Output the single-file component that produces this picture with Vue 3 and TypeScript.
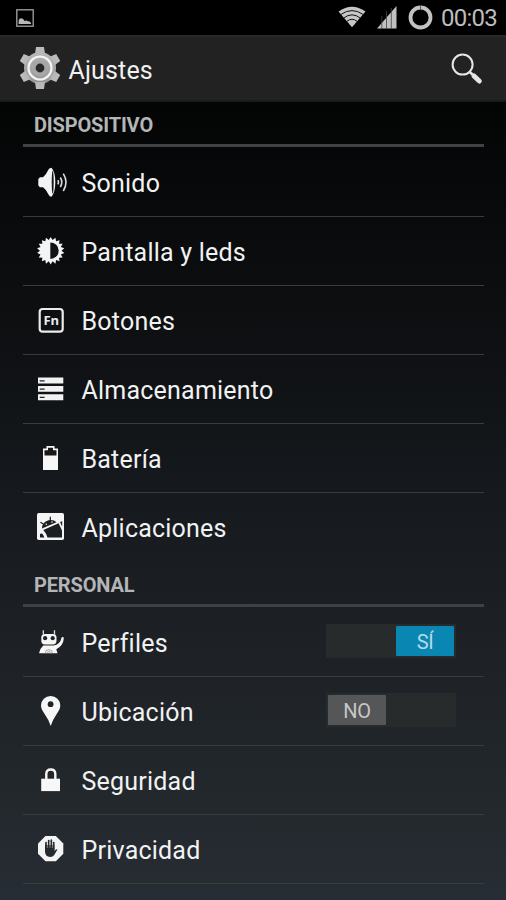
<script setup lang="ts">
import { ref } from 'vue'

interface Item {
  icon: string
  label: string
  on?: boolean
}
interface Section {
  title: string
  items: Item[]
}

const sections = ref<Section[]>([
  {
    title: 'DISPOSITIVO',
    items: [
      { icon: 'sound', label: 'Sonido' },
      { icon: 'display', label: 'Pantalla y leds' },
      { icon: 'buttons', label: 'Botones' },
      { icon: 'storage', label: 'Almacenamiento' },
      { icon: 'battery', label: 'Batería' },
      { icon: 'apps', label: 'Aplicaciones' },
    ],
  },
  {
    title: 'PERSONAL',
    items: [
      { icon: 'profiles', label: 'Perfiles', on: true },
      { icon: 'location', label: 'Ubicación', on: false },
      { icon: 'security', label: 'Seguridad' },
      { icon: 'privacy', label: 'Privacidad' },
    ],
  },
])

// Saw-toothed disc used by the brightness icon
const teeth = 18
const sun = Array.from({ length: teeth * 2 }, (_, i) => {
  const r = i % 2 ? 10.8 : 13.8
  const a = (i * Math.PI) / teeth - Math.PI / 2
  return `${(16.7 + r * Math.cos(a)).toFixed(2)},${(16.7 + r * Math.sin(a)).toFixed(2)}`
}).join(' ')

const gearAngles = [0, 60, 120, 180, 240, 300]

function toggle(item: Item) {
  if (item.on !== undefined) item.on = !item.on
}
</script>

<template>
  <div class="screen">
    <div class="status">
      <svg class="shot" width="18" height="18" viewBox="0 0 18 18">
        <rect x=".8" y=".8" width="16.4" height="16.4" fill="none" stroke="#a4a4a4" stroke-width="1.3" />
        <path d="M2.6 15V11.4Q3.8 8.6 6 9.4Q7.6 9.4 8.6 12Q10.5 10.8 12 12.3Q14.6 11.5 15.3 15Z" fill="#b8b8b8" />
      </svg>
      <svg class="wifi" width="28" height="22" viewBox="0 0 28 22">
        <path d="M.5 5.5Q14-4.2 27.5 5.5L14 21.3Z" fill="#c6c6c6" />
        <g fill="none" stroke="#111" stroke-width="1">
          <path d="M2.6 8.600Q14 .6 25.400 8.600" />
          <path d="M5.600 12.100Q14 5.600 22.400 12.100" />
          <path d="M8.600 15.500Q14 11 19.400 15.500" />
        </g>
      </svg>
      <svg class="signal" width="20" height="23" viewBox="0 0 20 23">
        <path d="M0 22.5L19.5 0V22.5Z" fill="#c0c0c0" />
        <path d="M4.800 10V23M9.500 5V23M14.300 2V23" stroke="#444" stroke-width=".8" />
      </svg>
      <svg class="ring" width="25" height="25" viewBox="0 0 25 25">
        <circle cx="12.5" cy="12.5" r="10" fill="none" stroke="#c2c2c2" stroke-width="3.8" />
        <path d="M12.500 0V5" stroke="#444" stroke-width=".8" />
      </svg>
      <span class="clock">00:03</span>
    </div>

    <header class="bar">
      <svg class="gear" width="42" height="44" viewBox="-21 -22 42 44">
        <defs>
          <linearGradient id="metal" x1="0" y1="-21" x2="0" y2="21" gradientUnits="userSpaceOnUse">
            <stop offset="0" stop-color="#bdbdbd" />
            <stop offset="1" stop-color="#8e8e8e" />
          </linearGradient>
        </defs>
        <g fill="url(#metal)">
          <circle r="16" />
          <path v-for="a in gearAngles" :key="a" d="M-5-14L-4-21H4L5-14Z" :transform="`rotate(${a})`" />
        </g>
        <circle r="8.5" fill="#a6a6a6" />
        <circle r="11.5" fill="none" stroke="#f3f3f3" stroke-width="2.2" />
        <circle r="4.4" fill="#292929" />
      </svg>
      <h1>Ajustes</h1>
      <svg class="search" width="32" height="32" viewBox="0 0 32 32">
        <circle cx="11.6" cy="11.6" r="10" fill="none" stroke="#e6e6e6" stroke-width="2" />
        <path d="M18.5 18.8L21.5 21.5" stroke="#e6e6e6" stroke-width="2.6" />
        <path d="M23 23L28.3 28" stroke="#e6e6e6" stroke-width="5" stroke-linecap="round" />
      </svg>
    </header>

    <main class="list">
      <section v-for="section in sections" :key="section.title">
        <h2>{{ section.title }}</h2>
        <div v-for="item in section.items" :key="item.label" class="row" @click="toggle(item)">
          <svg class="icon" width="34" height="34" viewBox="0 0 34 34">
            <g v-if="item.icon === 'sound'">
              <path d="M4.3 14L6 12.300H9Q12.500 9 14.500 4.500Q15.500 2.700 17.500 2.700Q21.300 7 21.300 17.200T17.500 31.700Q15.500 31.700 14.500 29.500Q12.500 24.800 9 22.300H6L4.300 20.500Z" fill="#f4f4f4" />
              <ellipse cx="18.700" cy="17.200" rx="1" ry="11.500" fill="#161718" />
              <path d="M23.900 15.200Q25 17.300 23.900 19.400M26.300 12.500Q29.300 17.300 26.300 22M29.300 8.600Q34.700 17.300 29.300 26" fill="none" stroke="#ddd" stroke-width="1.6" />
            </g>
            <g v-else-if="item.icon === 'display'">
              <polygon :points="sun" fill="#f4f4f4" />
              <path d="M16.300 8.400A8.400 8.300 0 0 1 16.300 25Z" fill="#111314" />
            </g>
            <g v-else-if="item.icon === 'buttons'">
              <rect x="5.700" y="6" width="23" height="22.700" rx="3" fill="none" stroke="#ececec" stroke-width="2.2" />
              <text x="17.300" y="21.500" class="fn">Fn</text>
            </g>
            <g v-else-if="item.icon === 'storage'">
              <path d="M4 5.500H29.300V11.500H4ZM4 14H29.300V19.700H4ZM4 22.300H29.300V28.200H4Z" fill="#f2f2f2" />
              <path d="M5.700 8.800H10.600M5.700 17.100H10.600M5.700 25.300H10.600" stroke="#222" stroke-width="1.3" />
            </g>
            <g v-else-if="item.icon === 'battery'">
              <path d="M9 29V7.500H12.500V5H20.500V7.500H24V29Z" fill="#f7f7f7" />
              <path d="M10.500 14.600V9.300H14V6.700H19V9.300H22.500V14.600Z" fill="#17191c" />
            </g>
            <g v-else-if="item.icon === 'apps'">
              <rect x="3" y="3" width="27" height="27" rx="1.8" fill="#f5f5f5" />
              <path d="M8 18.600Q8 12 14.500 10.300Q19.500 9.300 22.500 12.200Z" fill="#1c1f22" />
              <path d="M9.300 19.900L24.600 13.300L28 20.500V27.500H13.500Q12.500 23.500 9.300 19.900Z" fill="#1c1f22" />
              <path d="M16.300 10.500V7.200M9.300 14L6.800 12.500" stroke="#1c1f22" stroke-width="1.2" stroke-linecap="round" />
              <path d="M6 24Q8.500 21.800 10.300 27.500H6ZM26 12L28.200 11.300V16.500Z" fill="#1c1f22" />
              <circle cx="12.3" cy="14.200" r=".8" fill="#f2f2f2" />
              <circle cx="18" cy="12" r=".8" fill="#f2f2f2" />
            </g>
            <g v-else-if="item.icon === 'profiles'">
              <path d="M9.300 5.200V9.500M20.500 5.200V9.500" stroke="#ddd" stroke-width="1.3" />
              <rect x="7.300" y="9" width="15.200" height="10.400" rx="3.600" fill="#f6f6f6" />
              <circle cx="11.100" cy="13.200" r="2.100" fill="#202327" />
              <circle cx="18.700" cy="13.200" r="2.100" fill="#202327" />
              <path d="M5 28.300Q6 23.500 9.300 20.600H19.500Q26 20 27.700 12.300Q29.500 11.600 29.800 13Q29.500 20.500 22.300 24.300L23.500 28.300Z" fill="#f6f6f6" />
              <path d="M11.300 28.300Q11.300 24.600 14.900 24.600T18.500 28.300M13.400 28.300Q13.400 26.500 14.900 26.500T16.400 28.300" fill="none" stroke="#8c8e91" stroke-width=".8" />
            </g>
            <g v-else-if="item.icon === 'location'">
              <path d="M16.700 32Q14.600 25.500 10.300 19.500Q7 14.800 7 11.500A9.600 9.500 0 0 1 26.300 11.500Q26.300 14.800 23 19.500Q18.800 25.500 16.700 32Z" fill="#f7f7f7" />
              <circle cx="16.600" cy="10.200" r="2.900" fill="#202327" />
            </g>
            <g v-else-if="item.icon === 'security'">
              <rect x="7.200" y="15.700" width="18.800" height="12.400" fill="#f7f7f7" />
              <path d="M12.300 16V11Q12.300 6.500 16.800 6.500T21.300 11V16" fill="none" stroke="#f7f7f7" stroke-width="2.4" />
            </g>
            <g v-else>
              <path d="M11.500 4H21.800L29.300 11.500V21.700L21.800 29.200H11.500L4 21.700V11.500Z" fill="#f4f4f4" />
              <path d="M11 13V20Q11.500 24.800 16 25Q19.500 25 20.800 22L23.500 17.500Q22 16.800 20.300 19.300V13Z" fill="#242a2f" />
              <path d="M12 16V10.500M14.700 16V8.500M17.300 16V8M19.700 18V10.500" stroke="#242a2f" stroke-width="1.7" stroke-linecap="round" />
              <path d="M13.350 11V16M16 10V16M18.600 11V16" stroke="#d8d8d8" stroke-width=".5" />
            </g>
          </svg>
          <span class="label">{{ item.label }}</span>
          <span v-if="item.on !== undefined" class="switch" :class="{ on: item.on }">
            <span class="thumb">{{ item.on ? 'SÍ' : 'NO' }}</span>
          </span>
        </div>
      </section>
    </main>
  </div>
</template>

<style>
body {
  margin: 0;
  background: #000;
}
</style>

<style scoped>
.screen {
  width: 506px;
  height: 900px;
  overflow: hidden;
  display: flex;
  flex-direction: column;
  font-family: Roboto, "Liberation Sans", sans-serif;
  background: linear-gradient(#000 0, #030505 100px, #0c0e10 300px, #15181c 480px, #1d2126 640px, #22272b 780px, #272d34 900px);
}
.status {
  box-sizing: border-box;
  height: 35px;
  flex: none;
  display: flex;
  align-items: center;
  padding: 0 9px 0 16px;
  background: #000;
}
.shot {
  margin-right: auto;
}
.wifi {
  margin-right: 11px;
  margin-top: -1px;
}
.signal {
  margin-right: 11px;
  margin-top: -1px;
}
.ring {
  margin-right: 8px;
  margin-top: -1px;
}
.clock {
  width: 56px;
  font-size: 24px;
  letter-spacing: -0.75px;
  line-height: 36px;
  padding-top: 1px;
  color: #bdbdbd;
}
.bar {
  box-sizing: border-box;
  height: 67px;
  flex: none;
  display: flex;
  align-items: center;
  padding: 0 23px 0 19px;
  background: #222;
  border-top: 2px solid #292929;
  border-bottom: 2px solid #191a1a;
}
.gear {
  margin-right: 7.5px;
  margin-top: -1px;
}
h1 {
  margin: 4px auto 0 0;
  font-size: 25px;
  letter-spacing: 0.15px;
  line-height: 30px;
  font-weight: 400;
  color: #f1f1f1;
}
.list {
  padding: 0 22px 0 23px;
}
h2 {
  box-sizing: border-box;
  height: 45px;
  margin: 0 0 1px;
  padding-left: 11px;
  font-size: 20px;
  letter-spacing: -0.15px;
  line-height: 46px;
  font-weight: 700;
  color: #b4b5b6;
  border-bottom: 3px solid #3f4244;
}
.row {
  box-sizing: border-box;
  height: 69px;
  display: flex;
  align-items: center;
  padding: 0 28px 0 11px;
  border-bottom: 1px solid #393c3e;
}
section:first-child .row:last-child {
  border-bottom-color: transparent;
}
.icon {
  flex: none;
  margin-right: 13.500px;
}
.fn {
  font: 700 13px "Open Sans", sans-serif;
  text-anchor: middle;
  fill: #ececec;
}
.label {
  flex: 1;
  font-size: 25px;
  letter-spacing: 0.22px;
  line-height: 34px;
  margin-top: 3px;
  color: #f1f2f2;
}
.switch {
  box-sizing: border-box;
  width: 130px;
  height: 34px;
  margin-top: -2px;
  padding: 2px;
  display: flex;
  background: #282b2c;
}
.switch.on {
  justify-content: flex-end;
}
.thumb {
  width: 58px;
  height: 30px;
  border-radius: 1px;
  background: #555657;
  color: #c6c7c7;
  font-size: 20px;
  letter-spacing: -0.3px;
  line-height: 32px;
  text-align: center;
}
.on .thumb {
  background: #0a86b2;
  color: #b8dae8;
}
</style>
